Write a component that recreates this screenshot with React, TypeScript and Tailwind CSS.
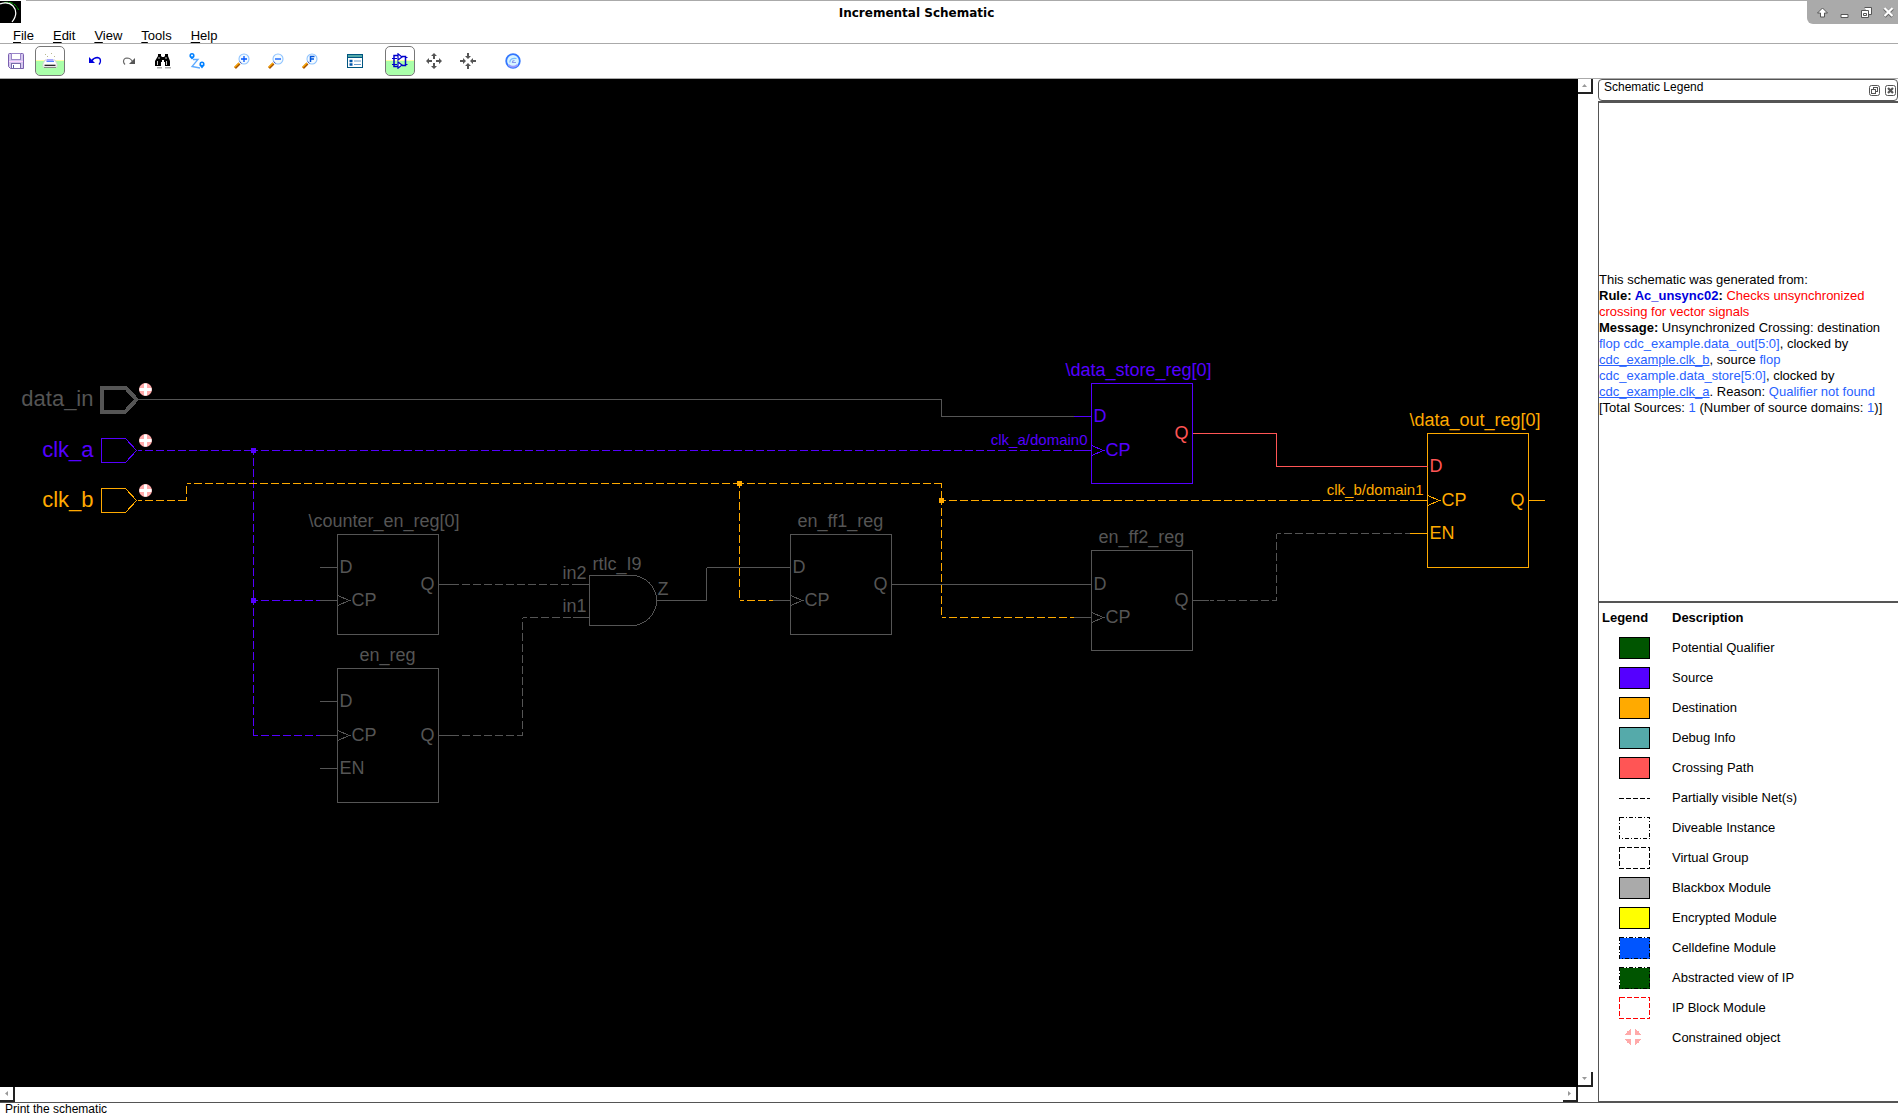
import React from 'react';

const GREY = '#555555';
const PURPLE = '#5500ff';
const ORANGE = '#ffaa00';
const RED = '#ff5555';

type Point = [number, number];

type WireProps = { points: Point[]; color: string; dashed?: boolean };

// every segment restarts its own dash pattern
const Wire: React.FC<WireProps> = ({ points, color, dashed }) => (
  <g stroke={color} strokeDasharray={dashed ? '8 3' : undefined} strokeDashoffset={dashed ? 4 : undefined}>
    {points.slice(1).map(([x, y], i) => (
      <line key={i} x1={points[i][0]} y1={points[i][1]} x2={x} y2={y} />
    ))}
  </g>
);

const Junction: React.FC<{ x: number; y: number; color: string }> = ({ x, y, color }) => (
  <rect x={x - 2} y={y - 2} width="4" height="4" fill={color} stroke={color} />
);

type Pin = { name: string; y: number; color?: string };

type RegisterProps = {
  label: string;
  labelX: number;
  x: number;
  y: number;
  height: number;
  color: string;
  inputs: Pin[];
  output: Pin;
};

const Register: React.FC<RegisterProps> = ({ label, labelX, x, y, height, color, inputs, output }) => (
  <g fontSize="18" fill={color}>
    <text x={labelX} y={y - 8}>{label}</text>
    <rect x={x} y={y} width="101" height={height} fill="none" stroke={color} />
    {inputs.map((pin) => (
      <g key={pin.name}>
        <line x1={x - 18} y1={pin.y} x2={x} y2={pin.y} stroke={pin.color ?? color} />
        {pin.name === 'CP' && (
          <path d={`M${x} ${pin.y - 5}L${x + 12} ${pin.y}L${x} ${pin.y + 5}`} fill="none" stroke={color} />
        )}
        <text x={pin.name === 'CP' ? x + 14 : x + 2} y={pin.y + 5} fill={pin.color ?? color}>
          {pin.name}
        </text>
      </g>
    ))}
    <line x1={x + 101} y1={output.y} x2={x + 117} y2={output.y} stroke={output.color ?? color} />
    <text x={x + 83} y={output.y + 5} fill={output.color ?? color}>{output.name}</text>
  </g>
);

type PortProps = { name: string; y: number; color: string; bus?: boolean };

const Port: React.FC<PortProps> = ({ name, y, color, bus }) => (
  <g>
    <text x="93" y={y + 6} fontSize="22" fill={color} textAnchor="end">{name}</text>
    <path
      d={`M101 ${y - 12}H125L136 ${y}L125 ${y + 12}H101Z`}
      fill="none"
      stroke={color}
      strokeWidth={bus ? 4 : 1}
    />
    <g shapeRendering="auto">
      <circle cx="145" cy={y - 10} r="6.5" fill="#ffaaaa" />
      <path d={`M145 ${y - 16}V${y - 4}M139 ${y - 10}H151`} stroke="#ffffff" strokeWidth="3" />
    </g>
  </g>
);

const Schematic = () => (
  <svg className="block h-full w-full" fontFamily="'Liberation Sans', Arial, sans-serif" role="img" aria-label="Schematic">
    <g transform="translate(0.5 -78.5)" shapeRendering="crispEdges">
      <Wire color={GREY} points={[[137, 399], [941, 399], [941, 416], [1075, 416]]} />
      <Wire color={PURPLE} dashed points={[[137, 450], [253, 450]]} />
      <Wire color={PURPLE} dashed points={[[253, 450], [1075, 450]]} />
      <Wire color={PURPLE} dashed points={[[253, 450], [253, 600]]} />
      <Wire color={PURPLE} dashed points={[[253, 600], [320, 600]]} />
      <Wire color={PURPLE} dashed points={[[253, 600], [253, 735], [320, 735]]} />
      <Wire color={ORANGE} dashed points={[[137, 500], [186, 500], [186, 483], [739, 483]]} />
      <Wire color={ORANGE} dashed points={[[739, 483], [739, 600], [773, 600]]} />
      <Wire color={ORANGE} dashed points={[[739, 483], [941, 483], [941, 500]]} />
      <Wire color={ORANGE} dashed points={[[941, 500], [1410, 500]]} />
      <Wire color={ORANGE} dashed points={[[941, 500], [941, 617], [1075, 617]]} />
      <Wire color={GREY} dashed points={[[454, 584], [572, 584]]} />
      <Wire color={GREY} dashed points={[[454, 735], [522, 735], [522, 617], [572, 617]]} />
      <Wire color={GREY} points={[[656, 600], [706, 600], [706, 567], [774, 567]]} />
      <Wire color={GREY} points={[[891, 584], [1075, 584]]} />
      <Wire color={GREY} dashed points={[[1209, 600], [1276, 600], [1276, 533], [1410, 533]]} />
      <Wire color={RED} points={[[1192, 433], [1276, 433], [1276, 466], [1427, 466]]} />

      <Junction x={253} y={450} color={PURPLE} />
      <Junction x={253} y={600} color={PURPLE} />
      <Junction x={739} y={483} color={ORANGE} />
      <Junction x={941} y={500} color={ORANGE} />

      <Port name="data_in" y={399} color={GREY} bus />
      <Port name="clk_a" y={450} color={PURPLE} />
      <Port name="clk_b" y={500} color={ORANGE} />

      <Register
        label="\counter_en_reg[0]" labelX={308} x={337} y={534} height={100} color={GREY}
        inputs={[{ name: 'D', y: 567 }, { name: 'CP', y: 600 }]}
        output={{ name: 'Q', y: 584 }}
      />
      <Register
        label="en_reg" labelX={359} x={337} y={668} height={134} color={GREY}
        inputs={[{ name: 'D', y: 701 }, { name: 'CP', y: 735 }, { name: 'EN', y: 768 }]}
        output={{ name: 'Q', y: 735 }}
      />
      <Register
        label="en_ff1_reg" labelX={797} x={790} y={534} height={100} color={GREY}
        inputs={[{ name: 'D', y: 567 }, { name: 'CP', y: 600 }]}
        output={{ name: 'Q', y: 584 }}
      />
      <Register
        label="en_ff2_reg" labelX={1098} x={1091} y={550} height={100} color={GREY}
        inputs={[{ name: 'D', y: 584 }, { name: 'CP', y: 617 }]}
        output={{ name: 'Q', y: 600 }}
      />
      <Register
        label="\data_store_reg[0]" labelX={1065} x={1091} y={383} height={100} color={PURPLE}
        inputs={[{ name: 'D', y: 416 }, { name: 'CP', y: 450 }]}
        output={{ name: 'Q', y: 433, color: RED }}
      />
      <Register
        label="\data_out_reg[0]" labelX={1409} x={1427} y={433} height={134} color={ORANGE}
        inputs={[{ name: 'D', y: 466, color: RED }, { name: 'CP', y: 500 }, { name: 'EN', y: 533 }]}
        output={{ name: 'Q', y: 500 }}
      />

      <g fontSize="18" fill={GREY}>
        <path d="M589 575H631A25 25 0 0 1 631 625H589Z" fill="none" stroke={GREY} />
        <path d="M572 584H589M572 617H589" stroke={GREY} />
        <text x="592" y="569">rtlc_I9</text>
        <text x="562" y="578">in2</text>
        <text x="562" y="611">in1</text>
        <text x="657" y="594">Z</text>
      </g>
      <text x="1087" y="444" fontSize="15" fill={PURPLE} textAnchor="end">clk_a/domain0</text>
      <text x="1423" y="494" fontSize="15" fill={ORANGE} textAnchor="end">clk_b/domain1</text>
    </g>
  </svg>
);

const Icon: React.FC<{ children: React.ReactNode }> = ({ children }) => (
  <svg className="h-4 w-4" viewBox="0 0 16 16" fill="none" aria-hidden="true">
    {children}
  </svg>
);

const Magnifier: React.FC<{ children: React.ReactNode }> = ({ children }) => (
  <Icon>
    <path d="M1 15L5.5 10.5" stroke="#aa5500" strokeWidth="2.6" />
    <path d="M.6 14.4L5 10" stroke="#ffaa00" strokeWidth="1.2" />
    <circle cx="10" cy="6" r="5" fill="#f4fbff" stroke="#8fc4ff" strokeWidth="1.1" />
    <path d="M5.6 8.5L7.5 10.4" stroke="#5555aa" />
    {children}
  </Icon>
);

const ARROWS_OUT = 'M8 0L11 3H9V6H7V3H5ZM8 16L5 13H7V10H9V13H11ZM0 8L3 5V7H6V9H3V11ZM16 8L13 11V9H10V7H13V5Z';
const ARROWS_IN = 'M8 6L5 3H7V0H9V3H11ZM8 10L11 13H9V16H7V13H5ZM6 8L3 11V9H0V7H3V5ZM10 8L13 5V7H16V9H13V11Z';

const toolGroups = [
  [
    {
      label: 'Save',
      icon: (
        <Icon>
          <path d="M.5 1.5Q.5.5 1.5.5H14.5Q15.5.5 15.5 1.5V15.5H2.5L.5 13.5Z" fill="#d4c8ee" stroke="#7a5fb0" />
          <rect x="3.5" y=".5" width="9" height="6" fill="#fff" stroke="#9a86c8" />
          <rect x="3.5" y="10.5" width="9" height="5" fill="#fff" stroke="#7a6aa8" />
          <path d="M5.5 12V15" stroke="#5555aa" />
          <path d="M1 8.5H15" stroke="#ffd4ff" />
        </Icon>
      ),
    },
    {
      label: 'Print',
      active: true,
      icon: (
        <Icon>
          <path d="M3 7H13L15 11V14H1V11Z" fill="#fff" stroke="#d5d5d5" />
          <path d="M5 6H11L12 9H4Z" fill="#aaaaff" />
          <path d="M5 8.5H12" stroke="#5588ff" />
          <path d="M2.5 12.3H13.5" stroke="#111" strokeWidth="1.2" />
          <path d="M2 14.5H14" stroke="#888" />
          <path d="M3 1.5H4M9 .5H10M5 3.5H6M12 3.5H13" stroke="#b8b890" />
        </Icon>
      ),
    },
  ],
  [
    {
      label: 'Undo',
      icon: (
        <Icon>
          <path d="M2 4V10H8Z" fill="#0000dd" />
          <path d="M4.5 8Q7 4.5 10.5 4.5Q13.5 4.8 13.5 8Q13.5 9.8 12 11.5" stroke="#0000dd" strokeWidth="1.3" />
        </Icon>
      ),
    },
    {
      label: 'Redo',
      icon: (
        <Icon>
          <path d="M14 5V11H8Z" fill="#555" />
          <path d="M11.5 8.5Q9.5 5 6 5Q2.5 5.2 2.5 8.5Q2.5 10 4 11.5" stroke="#666" strokeWidth="1.2" />
        </Icon>
      ),
    },
    {
      label: 'Find',
      icon: (
        <Icon>
          <path d="M10 14H16V15.5H10ZM2 14H7V15.5H2Z" fill="#aaa" />
          <path d="M3 1H6V3L7 4H9L10 3V1H13V3L15 8V13H10V9H9V7H7V9H6V13H0V8L3 3Z" fill="#000" />
          <path d="M2.5 8V12M4 4V6M11.5 8V12M11 4V6" stroke="#fff" strokeWidth=".8" />
        </Icon>
      ),
    },
    {
      label: 'Trace path',
      icon: (
        <Icon>
          <path d="M3 6.5L.6 4Q-.2 0 3 0Q6.2 0 5.400 4Z" fill="#0080ff" />
          <circle cx="3" cy="2.5" r="1" fill="#fff" />
          <path d="M13 15.5L10.6 12.500Q9.8 8.5 13 8.5Q16.2 8.5 15.400 12.500Z" fill="#0080ff" />
          <circle cx="13" cy="11" r="1" fill="#fff" />
          <path d="M4 6.5H9L3 13.5L11 15" stroke="#5caaff" strokeWidth="1.3" />
        </Icon>
      ),
    },
  ],
  [
    { label: 'Zoom in', icon: <Magnifier><path d="M10 3V9M7 6H13" stroke="#0055ff" strokeWidth="1.3" /></Magnifier> },
    { label: 'Zoom out', icon: <Magnifier><path d="M7 6H13" stroke="#0055ff" strokeWidth="1.3" /></Magnifier> },
    { label: 'Zoom fit', icon: <Magnifier><path d="M8.5 9V3.5H12.5M8.5 6H12" stroke="#0055dd" strokeWidth="1.5" /></Magnifier> },
  ],
  [
    {
      label: 'Show legend',
      icon: (
        <Icon>
          <rect x=".5" y="1.5" width="15" height="13" fill="#fff" stroke="#005580" />
          <path d="M1 3H15" stroke="#55aaaa" strokeWidth="2" />
          <path d="M1 4.5H15" stroke="#005580" />
          <path d="M2.500 8H5.500M2.500 11.5H5.500" stroke="#0055aa" strokeWidth="2.4" />
          <path d="M7 8H14M7 11.5H14" stroke="#6699cc" />
        </Icon>
      ),
    },
  ],
  [
    {
      label: 'Schematic view',
      active: true,
      icon: (
        <Icon>
          <path d="M6 .8V7L10 4ZM6 9V15.200L10 12Z" fill="#fff" stroke="#0000cc" strokeWidth="1.2" />
          <path d="M6 2.5H2V13.5H6M10 3.5H13.5V12.500H10" stroke="#0000cc" strokeWidth="1.5" />
          <path d="M0 5.5H5M0 11.5H5M13 4.500H15.500M13 11.5H15.500" stroke="#0000cc" />
        </Icon>
      ),
    },
    { label: 'Expand', icon: <Icon><path d={ARROWS_OUT} fill="#555" /></Icon> },
    { label: 'Collapse', icon: <Icon><path d={ARROWS_IN} fill="#555" /></Icon> },
  ],
  [
    {
      label: 'Refresh',
      icon: (
        <Icon>
          <circle cx="8" cy="8" r="6.8" fill="#d8f4ff" stroke="#3377ff" strokeWidth="1.8" />
          <path d="M3.5 12Q8 15.5 12.5 12" stroke="#9999ff" strokeWidth="1.8" />
          <path d="M11.5 5.5Q5 4.500 4.800 9.500" stroke="#77bbff" strokeWidth="1.2" />
          <path d="M11 9.500H7.500Q7.500 7.500 9.500 7.500" stroke="#8899ee" strokeWidth="1.2" />
        </Icon>
      ),
    },
  ],
];

const menus = ['File', 'Edit', 'View', 'Tools', 'Help'];

type Swatch = { label: string; fill?: string; stroke?: string; dash?: string; kind?: 'net' | 'constrained' };

const legend: Swatch[] = [
  { label: 'Potential Qualifier', fill: '#005500' },
  { label: 'Source', fill: '#5500ff' },
  { label: 'Destination', fill: '#ffaa00' },
  { label: 'Debug Info', fill: '#55aaaa' },
  { label: 'Crossing Path', fill: '#ff5555' },
  { label: 'Partially visible Net(s)', kind: 'net' },
  { label: 'Diveable Instance', dash: '4 2 1 2' },
  { label: 'Virtual Group', dash: '5 2' },
  { label: 'Blackbox Module', fill: '#aaaaaa' },
  { label: 'Encrypted Module', fill: '#ffff00' },
  { label: 'Celldefine Module', fill: '#0055ff', dash: '4 2 1 2' },
  { label: 'Abstracted view of IP', fill: '#005500', dash: '4 2 1 2' },
  { label: 'IP Block Module', stroke: '#ff0000', dash: '5 2' },
  { label: 'Constrained object', kind: 'constrained' },
];

const LegendSwatch: React.FC<{ item: Swatch }> = ({ item }) => (
  <svg className="block h-[22px] w-[31px]" viewBox="0 0 31 22" shapeRendering="crispEdges" aria-hidden="true">
    {item.kind === 'net' && <path d="M0 11.5H31" stroke="#000" strokeDasharray="5 2" />}
    {item.kind === 'constrained' && (
      <>
        <circle cx="14" cy="10" r="8" fill="#ffaaaa" />
        <path d="M14 1V19M5 10H23" stroke="#fff" strokeWidth="4" />
      </>
    )}
    {!item.kind && (
      <rect
        x=".5"
        y=".5"
        width="30"
        height="21"
        fill={item.fill ?? '#fff'}
        stroke={item.stroke ?? '#000'}
        strokeDasharray={item.dash}
      />
    )}
  </svg>
);

const arrowPaths = {
  up: 'M4 8L6.5 5L9 8Z',
  down: 'M4 5L6.5 8L9 5Z',
  left: 'M8 4L5 6.5L8 9Z',
  right: 'M5 4L8 6.5L5 9Z',
};

const ScrollButton: React.FC<{ direction: keyof typeof arrowPaths }> = ({ direction }) => (
  <button
    aria-label={`Scroll ${direction}`}
    className="h-[15px] w-[15px] shrink-0 border-r-2 border-b-2 border-r-[#222222] border-b-[#222222] bg-white"
  >
    <svg className="block" width="13" height="13" viewBox="0 0 13 13" aria-hidden="true">
      <path d={arrowPaths[direction]} fill="#999999" />
    </svg>
  </button>
);

const blue = 'text-[#2962ff]';

const LegendDock = () => (
  <aside className="ml-[5px] flex w-[300px] shrink-0 flex-col">
    <header className="flex h-[22px] shrink-0 items-start justify-between rounded-sm border border-[#555555] pl-[5px]">
      <h2 className="text-[12px] leading-[14px]">Schematic Legend</h2>
      <div className="flex gap-[5px] pt-[5px] pr-px">
        <button aria-label="Float">
          <svg className="block" width="11" height="11" viewBox="0 0 11 11" fill="none" stroke="#555">
            <rect x=".5" y=".5" width="10" height="10" rx="2" />
            <rect x="4.5" y="2.5" width="4" height="4" />
            <rect x="2.5" y="4.5" width="4" height="4" fill="#fff" />
          </svg>
        </button>
        <button aria-label="Close">
          <svg className="block" width="11" height="11" viewBox="0 0 11 11" fill="none" stroke="#555">
            <rect x=".5" y=".5" width="10" height="10" rx="2" />
            <path d="M3 3L8 8M8 3L3 8" strokeWidth="2.2" />
          </svg>
        </button>
      </div>
    </header>
    <section className="flex min-h-0 flex-1 items-center border-t-2 border-l border-[#555555]">
      <p className="pb-4 text-[13px] leading-4">
        This schematic was generated from:
        <br />
        <b>Rule: </b>
        <b className="text-[#0000dd]">Ac_unsync02</b>
        <b>: </b>
        <span className="text-[#ff0000]">Checks unsynchronized crossing for vector signals</span>
        <br />
        <b>Message:</b> Unsynchronized Crossing: destination{' '}
        <span className={blue}>flop cdc_example.data_out[5:0]</span>, clocked by{' '}
        <a href="#clk_b" className="text-[#2962ff] underline">cdc_example.clk_b</a>, source{' '}
        <span className={blue}>flop cdc_example.data_store[5:0]</span>, clocked by{' '}
        <a href="#clk_a" className="text-[#2962ff] underline">cdc_example.clk_a</a>. Reason:{' '}
        <span className={blue}>Qualifier not found</span>
        <br />
        [Total Sources: <span className={blue}>1</span> (Number of source domains: <span className={blue}>1</span>)]
      </p>
    </section>
    <section className="min-h-0 flex-1 overflow-hidden border-t-2 border-b border-l border-[#555555]">
      <table className="w-full text-left text-[13px] leading-4">
        <thead>
          <tr className="h-[30px]">
            <th className="w-[73px] py-0 pl-[3px]">Legend</th>
            <th className="p-0">Description</th>
          </tr>
        </thead>
        <tbody>
          {legend.map((item) => (
            <tr key={item.label} className="h-[30px]">
              <td className="py-0 pl-5"><LegendSwatch item={item} /></td>
              <td className="p-0">{item.label}</td>
            </tr>
          ))}
        </tbody>
      </table>
    </section>
  </aside>
);

const windowButtons = [
  { label: 'Roll up', path: 'M6.5 2L11.5 7H8.5V11H4.5V7H1.5Z' },
  { label: 'Minimize', path: 'M3 8.5H10V11.5H3Z' },
  { label: 'Restore', path: 'M4.5 1.5H11.5V8.5H9M1.5 4.5H8.5V11.5H1.5ZM3.5 7.5H6.5V9.5H3.5Z' },
];

const TitleBar = () => (
  <header className="flex h-6 shrink-0">
    <svg className="mt-px mr-[5px] h-[22px] w-[21px] shrink-0" viewBox="0 0 21 22" fill="none" aria-hidden="true">
      <rect width="21" height="22" fill="#000" />
      <path d="M4 1.5Q15 0 18.5 9" stroke="#00aa00" strokeDasharray="4 1" />
      <path d="M0 3Q8 0 13 5Q19 12 12 21" stroke="#fff" strokeWidth="1.2" />
    </svg>
    <div className="flex flex-1 items-center justify-center border-t border-[#aaaaaa]">
      <h1 className="font-['DejaVu_Sans',sans-serif] text-[12px] leading-4 font-bold">Incremental Schematic</h1>
    </div>
    <div className="flex shrink-0 items-center gap-[9px] rounded-bl-md bg-[#aaaaaa] pr-[3px] pl-[9px]">
      {windowButtons.map((b) => (
        <button key={b.label} aria-label={b.label}>
          <svg className="block" width="13" height="13" viewBox="0 0 13 13">
            <path d={b.path} fill="#fff" stroke="#555" />
          </svg>
        </button>
      ))}
      <button aria-label="Close window">
        <svg className="block" width="13" height="13" viewBox="0 0 13 13">
          <path d="M2.5 2.5L10.5 10.5M10.5 2.5L2.5 10.5" stroke="#666" strokeWidth="3.5" />
          <path d="M2.5 2L10.5 10M10.5 2L2.5 10" stroke="#fff" strokeWidth="2.4" />
        </svg>
      </button>
    </div>
  </header>
);

export default function App() {
  return (
    <div className="flex h-screen flex-col overflow-hidden bg-white font-['Liberation_Sans',Arial,sans-serif] text-black">
      <TitleBar />
      <nav className="flex h-5 shrink-0 items-center gap-[19px] border-b border-[#aaaaaa] pt-[5px] pl-[13px]">
        {menus.map((menu) => (
          <button key={menu} className="text-[13px] leading-4">
            <span className="underline underline-offset-2">{menu[0]}</span>
            {menu.slice(1)}
          </button>
        ))}
      </nav>
      <div className="flex h-[35px] shrink-0 items-center gap-[17px] border-b border-[#aaaaaa] pl-[2px]">
        {toolGroups.map((group, i) => (
          <div key={i} className="flex gap-[6px]">
            {group.map((tool) => (
              <button
                key={tool.label}
                aria-label={tool.label}
                className={`flex h-7 w-7 items-center justify-center rounded-sm ${
                  'active' in tool && tool.active
                    ? 'bg-[linear-gradient(#ffffff_46%,#ffffaa_46%,#ffffaa_50%,#aaffaa_50%)] outline outline-[#777777]'
                    : ''
                }`}
              >
                {tool.icon}
              </button>
            ))}
          </div>
        ))}
      </div>
      <div className="flex min-h-0 flex-1">
        <main className="flex min-w-0 flex-1 flex-col">
          <div className="flex min-h-0 flex-1">
            <div className="min-w-0 flex-1 overflow-hidden bg-black">
              <Schematic />
            </div>
            <div className="flex w-[15px] shrink-0 flex-col justify-between">
              <ScrollButton direction="up" />
              <ScrollButton direction="down" />
            </div>
          </div>
          <div className="flex h-[15px] shrink-0 justify-between pr-[15px]">
            <ScrollButton direction="left" />
            <ScrollButton direction="right" />
          </div>
        </main>
        <LegendDock />
      </div>
      <footer className="h-[14px] shrink-0 border-t border-[#555555] pl-[5px] text-[12px] leading-[13px]">
        Print the schematic
      </footer>
    </div>
  );
}
